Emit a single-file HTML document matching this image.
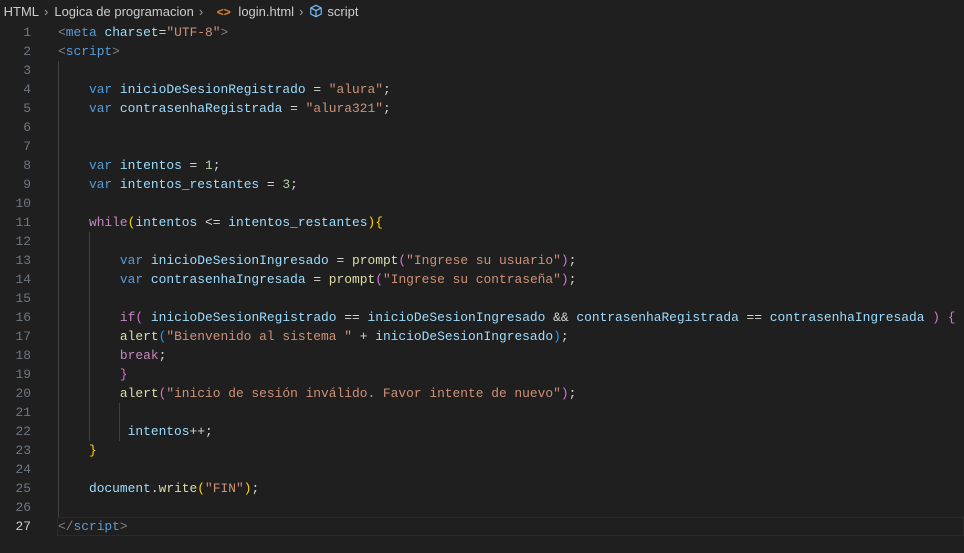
<!DOCTYPE html>
<html><head><meta charset="utf-8"><style>
body{margin:0;width:964px;height:553px;background:#1f1f1f;overflow:hidden;font-family:"Liberation Sans",sans-serif;}
.bc{position:absolute;left:0;top:0;height:22px;line-height:23px;font-size:13px;color:#cccccc;white-space:nowrap;}
.bc .sep{color:#a0a0a0;margin:0 6px 0 5px;}
.code{position:absolute;left:0;top:23px;width:964px;font-family:"Liberation Mono",monospace;font-size:12.9px;}
.l{height:19px;line-height:19px;position:relative;white-space:pre;}
.n{position:absolute;left:0;width:31px;text-align:right;color:#6e7681;}
.t{position:absolute;left:58px;color:#d4d4d4;}
.act{background:#1f1f1f;outline:1px solid #2a2a2a;outline-offset:-1px;margin-left:57px;}
.act .n{left:-57px;color:#cccccc;}
.act .t{left:1px;}
.g{position:absolute;top:0;width:1px;height:19px;background:#404040;}
.k{color:#569cd6}.v{color:#9cdcfe}.s{color:#ce9178}.f{color:#dcdcaa}.c{color:#c586c0}.nu{color:#b5cea8}.gr{color:#808080}
.b1{color:#ffd700}.b2{color:#da70d6}.b3{color:#179fff}
</style></head><body>
<div class="bc">&nbsp;HTML<span class="sep">&#x203A;</span>Logica de programacion<span class="sep">&#x203A;</span> <span style="color:#e8833a;font-weight:bold;font-size:12px;margin:0 4px 0 4px">&lt;&gt;</span> login.html<span class="sep">&#x203A;</span><svg width="14" height="14" viewBox="0 0 16 16" style="vertical-align:-2px;margin-right:4px"><path d="M8 1.5 14 4.5v7L8 14.5 2 11.5v-7z M2 4.5 8 7.5 14 4.5 M8 7.5v7" fill="none" stroke="#75beff" stroke-width="1.3"/></svg>script</div>
<div class="code">
<div class="l"><span class="n">1</span><span class="t"><span class="gr">&lt;</span><span class="k">meta</span> <span class="v">charset</span>=<span class="s">"UTF-8"</span><span class="gr">&gt;</span></span></div>
<div class="l"><span class="n">2</span><span class="t"><span class="gr">&lt;</span><span class="k">script</span><span class="gr">&gt;</span></span></div>
<div class="l"><span class="n">3</span><i class="g" style="left:58px"></i></div>
<div class="l"><span class="n">4</span><i class="g" style="left:58px"></i><span class="t">    <span class="k">var</span> <span class="v">inicioDeSesionRegistrado</span> = <span class="s">"alura"</span>;</span></div>
<div class="l"><span class="n">5</span><i class="g" style="left:58px"></i><span class="t">    <span class="k">var</span> <span class="v">contrasenhaRegistrada</span> = <span class="s">"alura321"</span>;</span></div>
<div class="l"><span class="n">6</span><i class="g" style="left:58px"></i></div>
<div class="l"><span class="n">7</span><i class="g" style="left:58px"></i></div>
<div class="l"><span class="n">8</span><i class="g" style="left:58px"></i><span class="t">    <span class="k">var</span> <span class="v">intentos</span> = <span class="nu">1</span>;</span></div>
<div class="l"><span class="n">9</span><i class="g" style="left:58px"></i><span class="t">    <span class="k">var</span> <span class="v">intentos_restantes</span> = <span class="nu">3</span>;</span></div>
<div class="l"><span class="n">10</span><i class="g" style="left:58px"></i></div>
<div class="l"><span class="n">11</span><i class="g" style="left:58px"></i><span class="t">    <span class="c">while</span><span class="b1">(</span><span class="v">intentos</span> &lt;= <span class="v">intentos_restantes</span><span class="b1">){</span></span></div>
<div class="l"><span class="n">12</span><i class="g" style="left:58px"></i><i class="g" style="left:89px"></i></div>
<div class="l"><span class="n">13</span><i class="g" style="left:58px"></i><i class="g" style="left:89px"></i><span class="t">        <span class="k">var</span> <span class="v">inicioDeSesionIngresado</span> = <span class="f">prompt</span><span class="b2">(</span><span class="s">"Ingrese su usuario"</span><span class="b2">)</span>;</span></div>
<div class="l"><span class="n">14</span><i class="g" style="left:58px"></i><i class="g" style="left:89px"></i><span class="t">        <span class="k">var</span> <span class="v">contrasenhaIngresada</span> = <span class="f">prompt</span><span class="b2">(</span><span class="s">"Ingrese su contraseña"</span><span class="b2">)</span>;</span></div>
<div class="l"><span class="n">15</span><i class="g" style="left:58px"></i><i class="g" style="left:89px"></i></div>
<div class="l"><span class="n">16</span><i class="g" style="left:58px"></i><i class="g" style="left:89px"></i><span class="t">        <span class="c">if</span><span class="b2">(</span> <span class="v">inicioDeSesionRegistrado</span> == <span class="v">inicioDeSesionIngresado</span> &amp;&amp; <span class="v">contrasenhaRegistrada</span> == <span class="v">contrasenhaIngresada</span> <span class="b2">)</span> <span class="b2">{</span></span></div>
<div class="l"><span class="n">17</span><i class="g" style="left:58px"></i><i class="g" style="left:89px"></i><span class="t">        <span class="f">alert</span><span class="b3">(</span><span class="s">"Bienvenido al sistema "</span> + <span class="v">inicioDeSesionIngresado</span><span class="b3">)</span>;</span></div>
<div class="l"><span class="n">18</span><i class="g" style="left:58px"></i><i class="g" style="left:89px"></i><span class="t">        <span class="c">break</span>;</span></div>
<div class="l"><span class="n">19</span><i class="g" style="left:58px"></i><i class="g" style="left:89px"></i><span class="t">        <span class="b2">}</span></span></div>
<div class="l"><span class="n">20</span><i class="g" style="left:58px"></i><i class="g" style="left:89px"></i><span class="t">        <span class="f">alert</span><span class="b2">(</span><span class="s">"inicio de sesión inválido. Favor intente de nuevo"</span><span class="b2">)</span>;</span></div>
<div class="l"><span class="n">21</span><i class="g" style="left:58px"></i><i class="g" style="left:89px"></i><i class="g" style="left:119px"></i></div>
<div class="l"><span class="n">22</span><i class="g" style="left:58px"></i><i class="g" style="left:89px"></i><i class="g" style="left:119px"></i><span class="t">         <span class="v">intentos</span>++;</span></div>
<div class="l"><span class="n">23</span><i class="g" style="left:58px"></i><span class="t">    <span class="b1">}</span></span></div>
<div class="l"><span class="n">24</span><i class="g" style="left:58px"></i></div>
<div class="l"><span class="n">25</span><i class="g" style="left:58px"></i><span class="t">    <span class="v">document</span>.<span class="f">write</span><span class="b1">(</span><span class="s">"FIN"</span><span class="b1">)</span>;</span></div>
<div class="l"><span class="n">26</span><i class="g" style="left:58px"></i></div>
<div class="l act"><span class="n">27</span><span class="t"><span class="gr">&lt;/</span><span class="k">script</span><span class="gr">&gt;</span></span></div>
</div>
</body></html>
